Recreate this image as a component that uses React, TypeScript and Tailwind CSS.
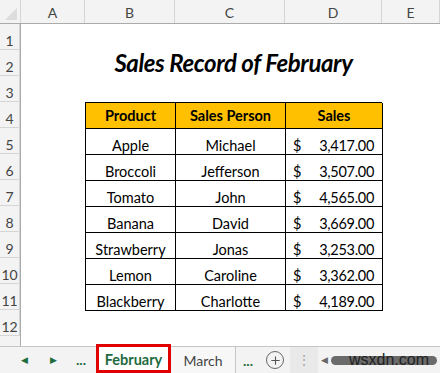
import { Plus } from "lucide-react";

const rows = [
  ["Apple", "Michael", "3,417.00"],
  ["Broccoli", "Jefferson", "3,507.00"],
  ["Tomato", "John", "4,565.00"],
  ["Banana", "David", "3,669.00"],
  ["Strawberry", "Jonas", "3,253.00"],
  ["Lemon", "Caroline", "3,362.00"],
  ["Blackberry", "Charlotte", "4,189.00"],
];

const font = { fontFamily: "Lato, 'Noto Sans', sans-serif" };

const RowNum = ({ n }: { n?: number }) => (
  <div className="flex h-[26px] items-end justify-center border-b border-r border-[#d5d5d5] bg-[#f3f3f3] text-[14px] leading-[17px] text-[#444]">
    {n}
  </div>
);

const Cell = ({ children, className = "" }: { children?: React.ReactNode; className?: string }) => (
  <div className={`flex h-[26px] border-b border-r border-black text-[14.5px] text-black ${className}`}>
    {children}
  </div>
);

export default function App() {
  return (
    <div className="relative h-[373px] w-[440px] overflow-hidden bg-white" style={font}>
      {/* column headers */}
      <div className="grid h-[24px] grid-cols-[21px_64px_90px_110px_97px_58px] border-b border-[#ababab] bg-[#f3f3f3] text-[14px] text-[#444]">
        <div className="relative border-r border-[#d5d5d5]">
          <div
            className="absolute bottom-[3px] right-[3px] h-0 w-0"
            style={{ borderBottom: "12px solid #dcdcdc", borderLeft: "12px solid transparent" }}
          />
        </div>
        {["A", "B", "C", "D", "E"].map((c) => (
          <div key={c} className="flex items-center justify-center border-r border-[#d5d5d5] pt-[2px]">
            {c}
          </div>
        ))}
      </div>

      <div className="grid grid-cols-[21px_64px_90px_110px_97px_58px]">
        {/* row numbers */}
        <div className="flex flex-col border-r border-[#ababab]">
          {[1, 2, 3, 4, 5, 6, 7, 8, 9, 10, 11, 12].map((n) => (
            <RowNum key={n} n={n} />
          ))}
          <div className="h-[10px] bg-[#f3f3f3]" />
        </div>

        <div />

        {/* content over B:D */}
        <div className="col-span-3 flex flex-col">
          <div className="h-[26px]" />
          <div className="flex h-[26px] items-end justify-center text-[24px] font-bold italic leading-[26px] tracking-[-0.4px] text-black">
            Sales Record of February
          </div>
          <div className="h-[26px]" />
          <div className="grid grid-cols-[90px_110px_97px] border-l border-t border-black">
            {["Product", "Sales Person", "Sales"].map((h) => (
              <Cell key={h} className="items-center justify-center bg-[#ffc000] pt-[1px] font-bold leading-[18px]">
                {h}
              </Cell>
            ))}
            {rows.map(([p, s, v]) => (
              <div key={p} className="contents">
                <Cell className="items-end justify-center leading-[16px]">{p}</Cell>
                <Cell className="items-end justify-center leading-[16px]">{s}</Cell>
                <Cell className="items-end justify-between pl-[7px] pr-[8px] leading-[16px]">
                  <span>$</span>
                  <span className="tracking-[-0.3px]">{v}</span>
                </Cell>
              </div>
            ))}
          </div>
        </div>

        <div />
      </div>

      {/* sheet tabs */}
      <div className="absolute bottom-0 left-0 flex h-[27px] w-[440px] items-stretch border-t border-[#c6c6c6] bg-[#f3f3f3] text-[14px]">
        <div className="flex w-[96px] items-center pl-[21px] text-[#1e6b3d]">
          <span className="text-[9px]">◀</span>
          <span className="ml-[22px] text-[9px]">▶</span>
          <span className="ml-[19px] font-bold leading-none">...</span>
        </div>
        <div className="-mt-[3px] flex w-[75px] items-center justify-center border-[3px] border-[#e00000] bg-white pt-[2px] text-[14.5px] font-bold text-[#1e6b3d]">
          February
        </div>
        <div className="flex w-[65px] items-center justify-center border-r border-[#c6c6c6] bg-[#f7f7f7] text-[#444]">
          March
        </div>
        <div className="flex w-[24px] items-center justify-center font-bold text-[#1e6b3d]">...</div>
        <div className="flex w-[30px] items-center justify-center text-[#555]">
          <div className="flex h-[18px] w-[18px] items-center justify-center rounded-full border border-[#666]">
            <Plus size={13} strokeWidth={2} />
          </div>
        </div>
        <div className="flex w-[28px] items-center justify-center bg-[#e9e9e9] text-[14px] leading-none text-[#aaa]">⋮</div>
        <div className="flex flex-1 items-center pl-[3px]">
          <span className="text-[9px] text-[#666]">◀</span>
          <div className="relative ml-[3px] h-[9px] flex-1 rounded-full bg-[#6b6b6b]">
            <span
              className="absolute -top-[6px] right-[8px] text-[16px] leading-[20px] text-[#222]"
              style={{ fontFamily: "'Liberation Sans', Arial, sans-serif" }}
            >
              wsxdn.com
            </span>
          </div>
          <div className="w-[3px]" />
        </div>
      </div>
    </div>
  );
}
